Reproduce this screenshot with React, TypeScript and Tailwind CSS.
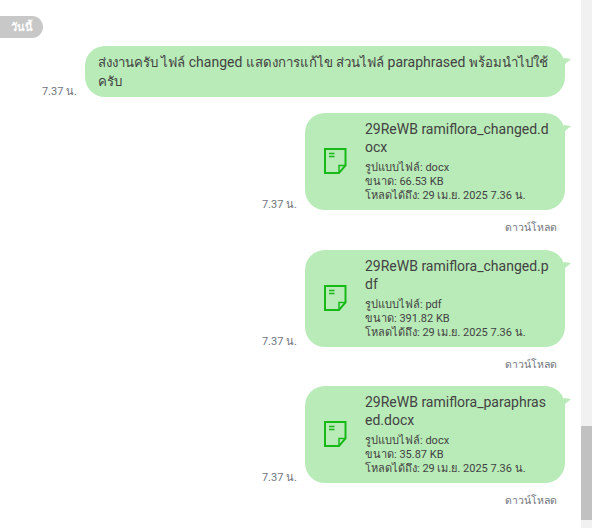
const FONT = "font-['Roboto','Noto_Sans','DejaVu_Sans',sans-serif]";

function Tail() {
  return (
    <svg className="absolute left-[100%] top-[12px] -ml-[1px]" width="7" height="7" viewBox="0 0 7 7">
      <path d="M0 0 L7 1 L0 7 Z" fill="#b9ebb8" />
    </svg>
  );
}

function DocIcon() {
  return (
    <svg width="23" height="26" viewBox="0 0 23 26" fill="none" stroke="#17b917" strokeWidth="2">
      <path d="M1 1 H21.5 V17.5 L15 25 H1 Z" />
      <path d="M21.5 17.5 H15 V25" strokeWidth="1.5" />
      <path d="M5 5.5 H10.5 M5 8.5 H10.5" strokeWidth="1.3" />
    </svg>
  );
}

function FileMessage({ title, type, size, mt }: { title: string; type: string; size: string; mt: string }) {
  return (
    <div className={`flex flex-col items-end ${mt}`}>
      <div className="flex items-end">
        <span className="mr-[8px] -mb-[2px] text-[11px] leading-[14px] text-[#70757c]">7.37 น.</span>
        <div className="relative flex h-[97px] w-[260px] rounded-[20px] bg-[#b9ebb8]">
          <Tail />
          <div className="flex w-[60px] shrink-0 items-center pb-[2px] pl-[19px]">
            <DocIcon />
          </div>
          <div className="min-w-0 pt-[7px] pr-[15px] text-[#424242]">
            <div className="break-all text-[14px] leading-[18px]">{title}</div>
            <div className="mt-[5px] text-[11px] leading-[14px]">
              <div>รูปแบบไฟล์: {type}</div>
              <div>ขนาด: {size}</div>
              <div>โหลดได้ถึง: 29 เม.ย. 2025 7.36 น.</div>
            </div>
          </div>
        </div>
      </div>
      <div className="mt-[11px] pr-[8px] text-[10.5px] leading-[14px] text-[#70757c]">ดาวน์โหลด</div>
    </div>
  );
}

export default function App() {
  return (
    <div className={`flex h-[528px] w-[592px] overflow-hidden bg-white ${FONT}`}>
      <main className="w-[581px] shrink-0 pt-[16px] pr-[16px]">
        <div className="flex h-[22px] w-[43px] items-center justify-center rounded-r-full rounded-l-[10px] bg-[#c8c8c8] pt-[2px] text-[11px] font-bold text-white">
          วันนี้
        </div>
        <div className="mt-[8px] flex items-end justify-end">
          <span className="mr-[8px] -mb-[2px] text-[11px] leading-[14px] text-[#70757c]">7.37 น.</span>
          <div className="relative h-[51px] w-[480px] whitespace-nowrap rounded-[20px] bg-[#b9ebb8] pl-[13px] pr-[8px] pt-[7px] text-[14px] leading-[19px] text-[#424242]">
            <Tail />
            <span className="text-[13.25px]">ส่งงานครับ ไฟล์</span> changed <span className="text-[13.25px]">แสดงการแก้ไข ส่วนไฟล์</span> paraphrased <span className="text-[13.25px]">พร้อมนำไปใช้</span>
            <br />
            <span className="text-[13.25px]">ครับ</span>
          </div>
        </div>
        <FileMessage mt="mt-[16px]" title="29ReWB ramiflora_changed.docx" type="docx" size="66.53 KB" />
        <FileMessage mt="mt-[15px]" title="29ReWB ramiflora_changed.pdf" type="pdf" size="391.82 KB" />
        <FileMessage mt="mt-[14px]" title="29ReWB ramiflora_paraphrased.docx" type="docx" size="35.87 KB" />
      </main>
      <aside className="flex w-[11px] flex-col bg-[#f1f1f1]">
        <div className="h-[426px]" />
        <div className="h-[94px] bg-[#c1c1c1]" />
      </aside>
    </div>
  );
}
